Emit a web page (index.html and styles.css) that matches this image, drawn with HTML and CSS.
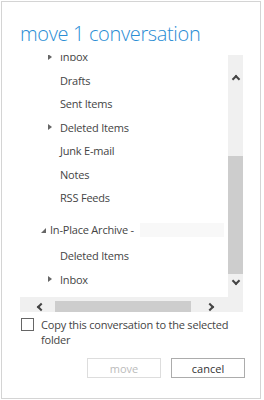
FILE: index.html
```html
<!DOCTYPE html>
<html lang="en">
<head>
    <meta charset="UTF-8">
    <meta name="viewport" content="width=device-width, initial-scale=1.0">
    <title>move 1 conversation</title>
    <link rel="stylesheet" href="styles.css">
</head>
<body>

<div class="dialog">
    <h1 class="title">move 1 conversation</h1>

    <div class="picker">
        <div class="viewport">
            <ul class="folders">
                <li class="folder sub"><span class="tri closed"></span>Inbox</li>
                <li class="folder sub"><span class="tri"></span>Drafts</li>
                <li class="folder sub"><span class="tri"></span>Sent Items</li>
                <li class="folder sub"><span class="tri closed"></span>Deleted Items</li>
                <li class="folder sub"><span class="tri"></span>Junk E-mail</li>
                <li class="folder sub"><span class="tri"></span>Notes</li>
                <li class="folder sub"><span class="tri"></span>RSS Feeds</li>
                <li class="folder top"><span class="tri open"></span>In-Place Archive -<span class="hidden-name"></span></li>
                <li class="folder sub"><span class="tri"></span>Deleted Items</li>
                <li class="folder sub"><span class="tri closed"></span>Inbox</li>
            </ul>
        </div>
        <div class="vscroll">
            <span class="arrow up"></span>
            <div class="vtrack"><div class="vthumb"></div></div>
            <span class="arrow down"></span>
        </div>
        <div class="hscroll">
            <span class="arrow left"></span>
            <div class="htrack"><div class="hthumb"></div></div>
            <span class="arrow right"></span>
        </div>
        <div class="corner"></div>
    </div>

    <label class="copy">
        <span class="box"></span>
        <span>Copy this conversation to the selected folder</span>
    </label>

    <div class="actions">
        <button class="btn" disabled>move</button>
        <button class="btn">cancel</button>
    </div>
</div>

</body>
</html>
```

FILE: styles.css
```css
body {
    margin: 0;
    padding: 1px;
    background-color: #fff;
    font-family: 'Open Sans', 'Noto Sans', sans-serif;
}
.dialog {
    box-sizing: border-box;
    width: 260px;
    height: 398px;
    border: 1px solid #d4d4d4;
    padding: 0 15px 0 18px;
}
.title {
    margin: 19px 0 0 0;
    font-size: 20px;
    line-height: 26px;
    font-weight: 300;
    color: #2a8dd4;
    letter-spacing: -0.35px;
}
.picker {
    margin-top: 8px;
    display: grid;
    grid-template-columns: 208px 15px;
    grid-template-rows: 242px 15px;
    width: 223px;
}
.viewport {
    overflow: hidden;
}
.folders {
    list-style: none;
    margin: -10px 0 0 0;
    padding: 0;
}
.folder {
    display: flex;
    align-items: center;
    height: 23.5px;
    font-size: 11px;
    letter-spacing: -0.2px;
    color: #444;
    white-space: nowrap;
}
.folder.sub {
    padding-left: 26px;
}
.folder.top {
    padding-left: 18px;
    margin-top: 8.5px;
    margin-bottom: 2.5px;
}
.tri {
    display: inline-block;
    width: 14px;
    height: 8px;
    position: relative;
}
.top .tri {
    width: 12px;
}
.tri.closed::before {
    content: '';
    position: absolute;
    left: 2px;
    top: 1px;
    border-left: 4px solid #666;
    border-top: 3px solid transparent;
    border-bottom: 3px solid transparent;
}
.tri.open::before {
    content: '';
    position: absolute;
    left: 3px;
    top: 2px;
    border-right: 5px solid #666;
    border-top: 5px solid transparent;
}
.hidden-name {
    display: inline-block;
    width: 84px;
    height: 14px;
    margin-left: 6px;
    background-color: #f8f8f8;
}
.vscroll {
    background-color: #f0f0f0;
    display: flex;
    flex-direction: column;
    align-items: center;
}
.vtrack {
    flex: 1;
    width: 100%;
    padding-top: 74px;
    padding-bottom: 4px;
    box-sizing: border-box;
    display: flex;
}
.vthumb {
    flex: 1;
    background-color: #cdcdcd;
}
.hscroll {
    background-color: #f0f0f0;
    display: flex;
    align-items: center;
}
.htrack {
    flex: 1;
    height: 100%;
    padding: 4px 6px 0 11px;
    box-sizing: border-box;
    display: flex;
}
.hthumb {
    width: 136px;
    background-color: #cdcdcd;
}
.corner {
    background-color: #f0f0f0;
}
.arrow {
    display: block;
    width: 6px;
    height: 6px;
    border-left: 2px solid #444;
    border-top: 2px solid #444;
    box-sizing: border-box;
}
.arrow.up {
    transform: rotate(45deg);
    margin: 21px 0 0 0;
}
.arrow.down {
    transform: rotate(225deg);
    margin: 0 0 13px 0;
}
.arrow.left {
    transform: rotate(-45deg);
    margin: 4px 0 0 18px;
}
.arrow.right {
    transform: rotate(135deg);
    margin: 4px 15px 0 0;
}
.copy {
    display: flex;
    align-items: flex-start;
    gap: 7px;
    margin-top: 5px;
    font-size: 11px;
    letter-spacing: -0.2px;
    line-height: 15px;
    color: #444;
}
.box {
    flex: none;
    width: 13px;
    height: 13px;
    box-sizing: border-box;
    border: 1px solid #666;
    margin: 1px 0 0 1px;
}
.actions {
    display: flex;
    justify-content: flex-end;
    gap: 10px;
    width: 225px;
    margin-top: 11px;
}
.btn {
    width: 74px;
    height: 20px;
    padding: 0;
    font-family: inherit;
    font-size: 11px;
    color: #333;
    background-color: #fff;
    border: 1px solid #acacac;
}
.btn:disabled {
    color: #bbb;
    border-color: #ddd;
}
```
